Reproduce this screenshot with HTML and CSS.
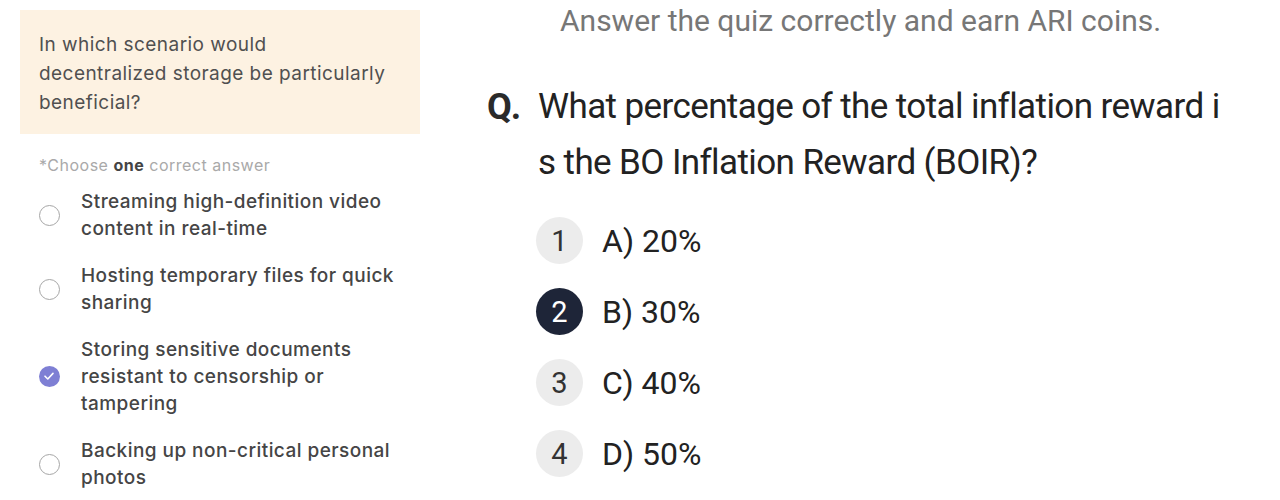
FILE: index.html
```html
<!DOCTYPE html>
<html>
  <head>
    <meta charset="utf-8">
    <title>Quiz</title>
    <link rel="stylesheet" href="styles.css">
  </head>
  <body>
    <div class="page">
      <div class="left">
        <div class="prompt">In which scenario would decentralized storage be particularly beneficial?</div>
        <p class="hint">*Choose <b>one</b> correct answer</p>
        <ul class="choices">
          <li><span class="radio"></span><span class="label">Streaming high-definition video content in real-time</span></li>
          <li><span class="radio"></span><span class="label">Hosting temporary files for quick sharing</span></li>
          <li><span class="radio checked">
            <svg width="20" height="20" viewBox="0 0 20 20"><path d="M6 10.2l2.8 2.8 5.2-5.6" fill="none" stroke="#fff" stroke-width="1.6" stroke-linecap="round" stroke-linejoin="round"/></svg>
          </span><span class="label">Storing sensitive documents resistant to censorship or tampering</span></li>
          <li><span class="radio"></span><span class="label">Backing up non-critical personal photos</span></li>
        </ul>
      </div>
      <div class="right">
        <p class="intro">Answer the quiz correctly and earn ARI coins.</p>
        <div class="question">
          <span class="q">Q.</span>
          <span class="qtext">What percentage of the total inflation reward is the BO Inflation Reward (BOIR)?</span>
        </div>
        <ul class="answers">
          <li><span class="num">1</span>A) 20%</li>
          <li><span class="num active">2</span>B) 30%</li>
          <li><span class="num">3</span>C) 40%</li>
          <li><span class="num">4</span>D) 50%</li>
        </ul>
      </div>
    </div>
  </body>
</html>
```

FILE: styles.css
```css
*{margin: 0;padding: 0;box-sizing: border-box;}
ul {list-style: none;}
body {background: #fff;}

.page {display: flex;width: 1280px;height: 500px;overflow: hidden;}

.left {width: 440px;padding: 10px 20px 0;font-family: Inter, "Noto Sans", sans-serif;}
.prompt {
  background: #fdf2e2;
  height: 124px;
  padding: 20px 30px 0 19px;
  font-size: 19px;
  line-height: 29px;
  color: #505050;
  letter-spacing: 0.45px;
}
.hint {margin-top: 21px;padding-left: 19px;font-size: 16px;color: #a9a9a9;letter-spacing: 0.5px;}
.hint b {color: #444;font-weight: 700;}

.choices {margin-top: 13px;}
.choices li {display: flex;align-items: center;margin-bottom: 20px;}
.radio {
  flex: none;
  width: 21px;
  height: 21px;
  margin-left: 19px;
  margin-right: 21px;
  border: 1.5px solid #a6a6a6;
  border-radius: 50%;
}
.radio.checked {background: #7e7fd4;border: none;}
.radio svg {display: block;}
.label {font-size: 19px;line-height: 27px;color: #454545;font-weight: 500;width: 320px;letter-spacing: 0.45px;}

.right {flex: 1;padding-left: 47px;font-family: Roboto, "Liberation Sans", sans-serif;}
.intro {margin: 3px 0 0 73px;font-size: 30px;color: #777;letter-spacing: 0;line-height: 36px;}
.question {display: flex;margin-top: 40px;}
.q {font-size: 36px;font-weight: 700;color: #2a2a2a;line-height: 56px;width: 51px;letter-spacing: -1px;}
.qtext {width: 694px;word-break: break-all;font-size: 35px;line-height: 56px;color: #222;letter-spacing: -0.6px;}

.answers {margin-top: 26px;padding-left: 49px;}
.answers li {display: flex;align-items: center;height: 47px;margin-bottom: 24px;font-size: 32px;color: #222;letter-spacing: 0;}
.num {
  width: 47px;
  height: 47px;
  border-radius: 50%;
  background: #ececec;
  color: #333;
  font-size: 29px;
  display: flex;
  align-items: center;
  justify-content: center;
  margin-right: 19px;
}
.num.active {background: #1e2538;color: #fff;}
```
